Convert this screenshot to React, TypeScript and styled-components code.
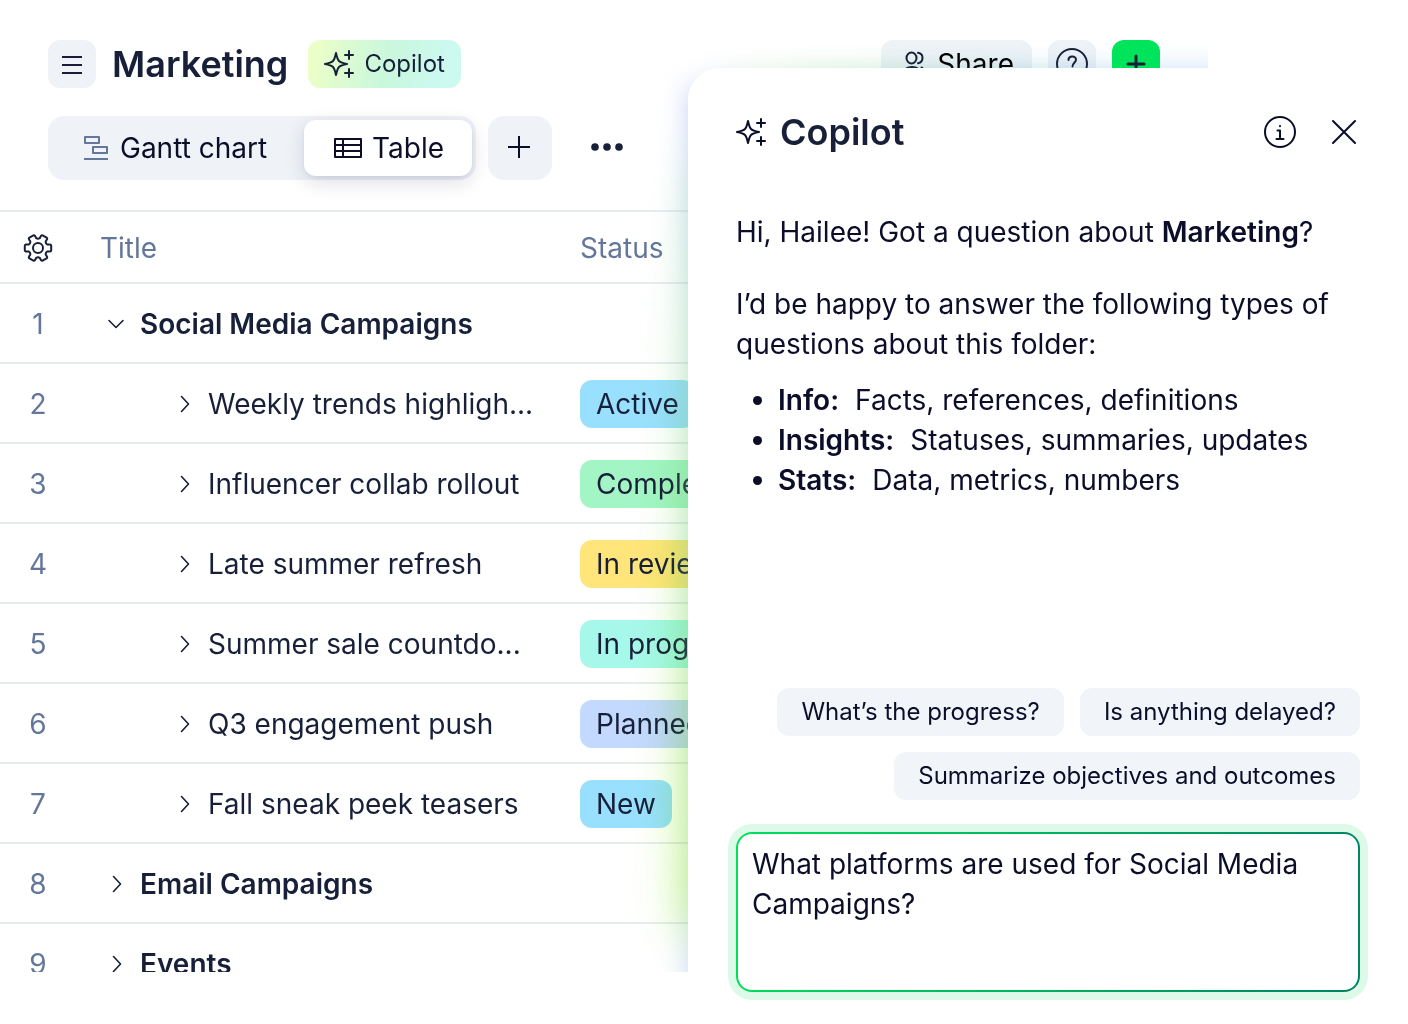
import React, { ReactNode } from "react";
import styled, { createGlobalStyle } from "styled-components";

const Global = createGlobalStyle`
  *, *::before, *::after { box-sizing: border-box; }
  body {
    margin: 0;
    background: #fff;
    color: #0b0d29;
    font-family: Inter, "Liberation Sans", sans-serif;
    font-size: 28px;
    line-height: 40px;
    overflow: hidden;
  }
  button, textarea { font: inherit; color: inherit; letter-spacing: inherit; }
  button { border: 0; padding: 0; background: none; cursor: pointer; }
  svg { display: block; flex: none; }
`;

const Stage = styled.main`
  display: grid;
  grid-template-columns: minmax(0, 1fr) 720px;
  height: 100vh;
`;

const Workspace = styled.section`
  grid-area: 1 / 1 / 2 / 3;
  position: relative;
  margin: 0 200px 52px 0;
  overflow: hidden;
  background: #fff;
`;

const TopBar = styled.header`
  display: flex;
  align-items: center;
  gap: 16px;
  padding: 40px 48px 0;
`;

const PageTitle = styled.h1`
  margin: 0 4px 0 0;
  font-size: 36px;
  line-height: 48px;
  font-weight: 600;
  color: #172038;
`;

const Spacer = styled.div`
  flex: 1;
`;

const SquareButton = styled.button<{ $tone?: "grey" | "green" }>`
  display: grid;
  place-items: center;
  width: 48px;
  height: 48px;
  border-radius: 12px;
  color: #172038;
  background: ${(p) => (p.$tone === "green" ? "#00e45b" : "#eff3f8")};
  position: relative;
  z-index: ${(p) => (p.$tone === "green" ? 3 : "auto")};
`;

const CopilotButton = styled.button`
  display: flex;
  align-items: center;
  gap: 8px;
  height: 48px;
  padding: 0 16px;
  border-radius: 12px;
  font-size: 24px;
  color: #172038;
  background: linear-gradient(100deg, #ecffc8 4%, #caf7dc 50%, #ccf9f0 88%);
`;

const ShareButton = styled.button`
  display: flex;
  align-items: center;
  gap: 12px;
  height: 48px;
  padding: 0 18px 0 20px;
  border-radius: 12px;
  color: #000;
  background: #eff3f8;
  svg { color: #172038; }
`;

const ViewBar = styled.nav`
  display: flex;
  align-items: center;
  gap: 12px;
  padding: 28px 48px 30px;
`;

const ViewSwitch = styled.div`
  display: flex;
  padding: 4px;
  border-radius: 16px;
  background: #eff3f8;
`;

const ViewTab = styled.button<{ $active?: boolean }>`
  display: flex;
  align-items: center;
  gap: ${(p) => (p.$active ? "10px" : "12px")};
  height: 56px;
  padding: ${(p) => (p.$active ? "0 28px 0 30px" : "0 37px 0 32px")};
  border-radius: 12px;
  background: ${(p) => (p.$active ? "#fff" : "transparent")};
  box-shadow: ${(p) => (p.$active ? "0 6px 20px rgba(20, 20, 60, 0.14), 0 2px 4px rgba(20, 20, 60, 0.06)" : "none")};
`;

const AddView = styled.button`
  display: grid;
  place-items: center;
  width: 64px;
  height: 64px;
  border-radius: 16px;
  background: #eff3f8;
`;

const MoreButton = styled.button`
  display: grid;
  place-items: center;
  width: 86px;
  height: 64px;
`;

const Table = styled.table`
  width: 100%;
  table-layout: fixed;
  border-collapse: separate;
  border-spacing: 0;
  border-top: 2px solid #e7ebf0;
  color: #172038;
  th, td { padding: 2px 0 0; text-align: left; border-bottom: 2px solid #e7ebf0; }
`;

const HeadCell = styled.th<{ $width?: string; $inset?: boolean }>`
  height: 72px;
  width: ${(p) => p.$width ?? "auto"};
  font-weight: 400;
  color: #64779b;
  && { padding-left: ${(p) => (p.$inset ? "24px" : "0")}; }
`;

const IndexCell = styled.td`
  height: 80px;
  && { text-align: center; }
  color: #64779b;
`;

const TitleInner = styled.div<{ $child?: boolean }>`
  display: flex;
  align-items: center;
  gap: 12px;
  padding-left: ${(p) => (p.$child ? "96px" : "28px")};
  font-weight: ${(p) => (p.$child ? 400 : 600)};
`;

const Toggle = styled.button`
  display: grid;
  place-items: center;
  width: 24px;
  height: 24px;
`;

const GearButton = styled.button`
  display: grid;
  place-items: center;
  width: 76px;
  height: 48px;
  color: #172038;
`;

const Status = styled.span<{ $color: string }>`
  display: inline-block;
  padding: 4px 16px;
  border-radius: 12px;
  vertical-align: middle;
  background: ${(p) => p.$color};
`;

const Glow = styled.div`
  position: absolute;
  z-index: 2;
  right: -200px;
  pointer-events: none;
`;

const GlowWide = styled(Glow)`
  top: 170px;
  bottom: 36px;
  width: 736px;
  filter: blur(20px);
  mix-blend-mode: multiply;
  background: linear-gradient(180deg, rgba(226, 246, 236, 0.3) 0%, rgba(220, 246, 222, 0.55) 25%, rgba(214, 246, 196, 0.75) 50%, rgba(218, 248, 182, 0.9) 75%, rgba(220, 250, 180, 0.95) 94%, #e4f8d8 100%);
`;

const GlowEdge = styled(Glow)`
  top: 88px;
  bottom: -40px;
  width: 720px;
  filter: blur(14px);
  background: linear-gradient(180deg, rgba(190, 200, 250, 0.8) 0%, rgba(165, 205, 214, 0.8) 13%, rgba(150, 205, 175, 0.55) 28%, rgba(130, 210, 145, 0.42) 60%, rgba(130, 210, 120, 0.4) 88%, rgba(180, 205, 240, 0.8) 95%);
`;

const GlowTop = styled(Glow)`
  top: 70px;
  height: 80px;
  width: 700px;
  filter: blur(14px);
  mix-blend-mode: multiply;
  background: linear-gradient(90deg, #f1f4fd 0%, #e6f6e2 8%, #cdeecc 18%, #c4ead8 30%, #bee2e4 45%, #c9e2f7 62%);
`;

const Panel = styled.aside`
  grid-area: 1 / 2 / 2 / 3;
  z-index: 4;
  display: flex;
  flex-direction: column;
  margin-top: 68px;
  padding: 40px 48px 32px;
  border-top-left-radius: 32px;
  background: #fff;
`;

const PanelHead = styled.header`
  display: flex;
  align-items: center;
  gap: 12px;
  height: 48px;
`;

const PanelTitle = styled.h2`
  flex: 1;
  margin: 0;
  font-size: 36px;
  line-height: 48px;
  font-weight: 600;
  color: #172038;
`;

const PanelActions = styled.div`
  display: flex;
  gap: 32px;
`;

const IconButton = styled.button`
  display: grid;
  place-items: center;
  width: 32px;
  height: 32px;
`;

const Message = styled.div`
  flex: 1;
  padding-top: 56px;
  p { margin: 0 0 32px; }
  p + p { margin-bottom: 16px; }
  ul { margin: 0; padding-left: 42px; }
  b { font-weight: 600; }
`;

const ListLabel = styled.b`
  margin-right: 16px;
`;

const Suggestions = styled.div`
  display: flex;
  flex-wrap: wrap;
  justify-content: flex-end;
  gap: 16px;
  margin-bottom: 32px;
`;

const Suggestion = styled.button`
  height: 48px;
  padding: 0 24px;
  border-radius: 12px;
  font-size: 24px;
  background: #f1f5fa;
`;

const Prompt = styled.textarea`
  display: block;
  width: 100%;
  height: 160px;
  padding: 10px 14px;
  resize: none;
  outline: none;
  border: 2px solid transparent;
  border-radius: 16px;
  background: linear-gradient(#fff, #fff) padding-box, linear-gradient(100deg, #00e05c, #008364) border-box;
  box-shadow: 0 0 0 8px #dcfae7;
`;

const Icon = ({ w = 32, h = w, sw = 2, children }: { w?: number; h?: number; sw?: number; children: ReactNode }) => (
  <svg width={w} height={h} viewBox={`0 0 ${w} ${h}`} fill="none" stroke="currentColor" strokeWidth={sw} strokeLinecap="round" strokeLinejoin="round" aria-hidden="true">
    {children}
  </svg>
);

const Sparkle = () => (
  <Icon>
    <path d="M12 5C13 9.5 13.8 11.8 15 13C16.4 14.4 18.8 15.2 23 16C18.8 16.8 16.4 17.6 15 19C13.8 20.2 13 22.5 12 27C11 22.5 10.2 20.2 9 19C7.6 17.6 5.2 16.8 1 16C5.2 15.2 7.6 14.4 9 13C10.2 11.8 11 9.5 12 5Z" />
    <path d="M25 3v8M21 7h8M25 21v8M21 25h8" />
  </Icon>
);

const Chevron = ({ open }: { open?: boolean }) => (
  <Icon w={24}>
    {open ? <path d="M5 8.5l7 7 7-7" strokeWidth="1.6" /> : <path d="M9.5 4.5l7 7.5-7 7.5" strokeWidth="1.6" />}
  </Icon>
);

const gearPath = (() => {
  const pts: string[] = [];
  for (let i = 0; i < 6; i++) {
    const at = (deg: number, r: number) => {
      const a = ((i * 60 + deg) * Math.PI) / 180;
      return `${(16 + r * Math.cos(a)).toFixed(2)} ${(16 + r * Math.sin(a)).toFixed(2)}`;
    };
    pts.push(`${i ? "L" : "M"}${at(-20, 10)}L${at(-16, 12.6)}Q${at(-14, 13.6)} ${at(-10, 13.4)}L${at(10, 13.4)}Q${at(14, 13.6)} ${at(16, 12.6)}L${at(20, 10)}Q${at(30, 8.6)} ${at(40, 10)}`);
  }
  return pts.join("") + "Z";
})();

type Row = { title: string; child?: boolean; open?: boolean; status?: string; color?: string };

const rows: Row[] = [
  { title: "Social Media Campaigns", open: true },
  { title: "Weekly trends highligh...", child: true, status: "Active", color: "#99e0ff" },
  { title: "Influencer collab rollout", child: true, status: "Completed", color: "#a3f5c5" },
  { title: "Late summer refresh", child: true, status: "In review", color: "#ffe57a" },
  { title: "Summer sale countdo...", child: true, status: "In progress", color: "#a6f8ea" },
  { title: "Q3 engagement push", child: true, status: "Planned", color: "#c3d9ff" },
  { title: "Fall sneak peek teasers", child: true, status: "New", color: "#99e0ff" },
  { title: "Email Campaigns" },
  { title: "Events" },
];

export default function App() {
  return (
    <>
      <Global />
      <Stage>
        <Workspace>
          <TopBar>
            <SquareButton aria-label="Menu">
              <Icon w={24}><path d="M3 5h18M3 13h18M3 21h18" strokeLinecap="square" /></Icon>
            </SquareButton>
            <PageTitle>Marketing</PageTitle>
            <CopilotButton><Sparkle />Copilot</CopilotButton>
            <Spacer />
            <ShareButton>
              <Icon w={24} h={32}>
                <ellipse cx="10.5" cy="10" rx="5" ry="5.5" />
                <path d="M17 4.8c6 1 6 9.4 0 10.4M3 26c0-5 3-7 8-7s8 2 8 7M20.5 19.5c2 1 2.5 3 2.5 6" />
              </Icon>
              Share
            </ShareButton>
            <SquareButton aria-label="Help">
              <Icon>
                <circle cx="16" cy="16" r="15" />
                <path d="M12.5 12c0-4.5 7.5-4.5 7.5-.5 0 3-3.5 3.5-3.5 7M16.5 22.5v.2" />
              </Icon>
            </SquareButton>
            <SquareButton $tone="green" aria-label="Create">
              <Icon w={24} sw={3}><path d="M12 4v16M4 12h16" /></Icon>
            </SquareButton>
          </TopBar>
          <ViewBar>
            <ViewSwitch>
              <ViewTab>
                <Icon w={24}>
                  <g stroke="#64779b">
                    <rect x="1" y="1" width="14" height="6" />
                    <rect x="9" y="11" width="14" height="6" />
                    <path d="M0 23h24" strokeLinecap="butt" />
                  </g>
                </Icon>
                Gantt chart
              </ViewTab>
              <ViewTab $active>
                <Icon w={28} h={20}>
                  <rect x="1" y="1" width="26" height="18" />
                  <path d="M1 7h26M1 13h26M9 1v18" />
                </Icon>
                Table
              </ViewTab>
            </ViewSwitch>
            <AddView aria-label="Add view">
              <Icon w={24}><path d="M11 0v22M0 11h22" strokeLinecap="butt" /></Icon>
            </AddView>
            <MoreButton aria-label="More">
              <svg width="32" height="10" viewBox="0 0 32 10" fill="#172038" aria-hidden="true">
                <circle cx="4" cy="4" r="3.8" /><circle cx="16" cy="4" r="3.8" /><circle cx="28" cy="4" r="3.8" />
              </svg>
            </MoreButton>
          </ViewBar>
          <Table>
            <thead>
              <tr>
                <HeadCell $width="76px">
                  <GearButton aria-label="Table settings">
                    <Icon><path d={gearPath} /><circle cx="16" cy="16" r="5" /></Icon>
                  </GearButton>
                </HeadCell>
                <HeadCell $width="504px" $inset>Title</HeadCell>
                <HeadCell>Status</HeadCell>
              </tr>
            </thead>
            <tbody>
              {rows.map((r, i) => (
                <tr key={r.title}>
                  <IndexCell>{i + 1}</IndexCell>
                  <td>
                    <TitleInner $child={r.child}>
                      <Toggle aria-label={`Toggle ${r.title}`}><Chevron open={r.open} /></Toggle>
                      {r.title}
                    </TitleInner>
                  </td>
                  <td>{r.status && <Status $color={r.color!}>{r.status}</Status>}</td>
                </tr>
              ))}
            </tbody>
          </Table>
          <GlowWide />
          <GlowEdge />
          <GlowTop />
        </Workspace>
        <Panel>
          <PanelHead>
            <Sparkle />
            <PanelTitle>Copilot</PanelTitle>
            <PanelActions>
              <IconButton aria-label="About Copilot">
                <Icon>
                  <circle cx="16" cy="16" r="15" />
                  <path d="M13.5 14.5H16V23M12.5 23h7M16 10v.2" />
                </Icon>
              </IconButton>
              <IconButton aria-label="Close">
                <Icon><path d="M5 5l22 22M27 5L5 27" /></Icon>
              </IconButton>
            </PanelActions>
          </PanelHead>
          <Message>
            <p>Hi, Hailee! Got a question about <b>Marketing</b>?</p>
            <p>I’d be happy to answer the following types of questions about this folder:</p>
            <ul>
              <li><ListLabel>Info:</ListLabel>Facts, references, definitions</li>
              <li><ListLabel>Insights:</ListLabel>Statuses, summaries, updates</li>
              <li><ListLabel>Stats:</ListLabel>Data, metrics, numbers</li>
            </ul>
          </Message>
          <Suggestions>
            <Suggestion>What’s the progress?</Suggestion>
            <Suggestion>Is anything delayed?</Suggestion>
            <Suggestion>Summarize objectives and outcomes</Suggestion>
          </Suggestions>
          <Prompt aria-label="Ask Copilot" defaultValue="What platforms are used for Social Media Campaigns?" />
        </Panel>
      </Stage>
    </>
  );
}
